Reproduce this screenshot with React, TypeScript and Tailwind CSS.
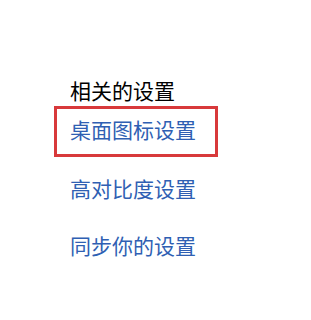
export default function App() {
  return (
    <div className="w-[311px] h-[320px] bg-white pl-[54px] pt-[78px] [font-family:'Noto_Sans_CJK_SC',sans-serif]">
      <h2 className="pl-[16px] text-[21px] leading-[24px] text-black font-normal">相关的设置</h2>
      <div className="mt-[4px] w-[164px] h-[51px] border-[3px] border-[#d8393b] pl-[13px] pt-[8px]">
        <a className="block text-[21px] leading-[24px] text-[#2f5fb3]">桌面图标设置</a>
      </div>
      <a className="block pl-[16px] mt-[19px] text-[21px] leading-[24px] text-[#2f5fb3]">高对比度设置</a>
      <a className="block pl-[16px] mt-[33px] text-[21px] leading-[24px] text-[#2f5fb3]">同步你的设置</a>
    </div>
  );
}
